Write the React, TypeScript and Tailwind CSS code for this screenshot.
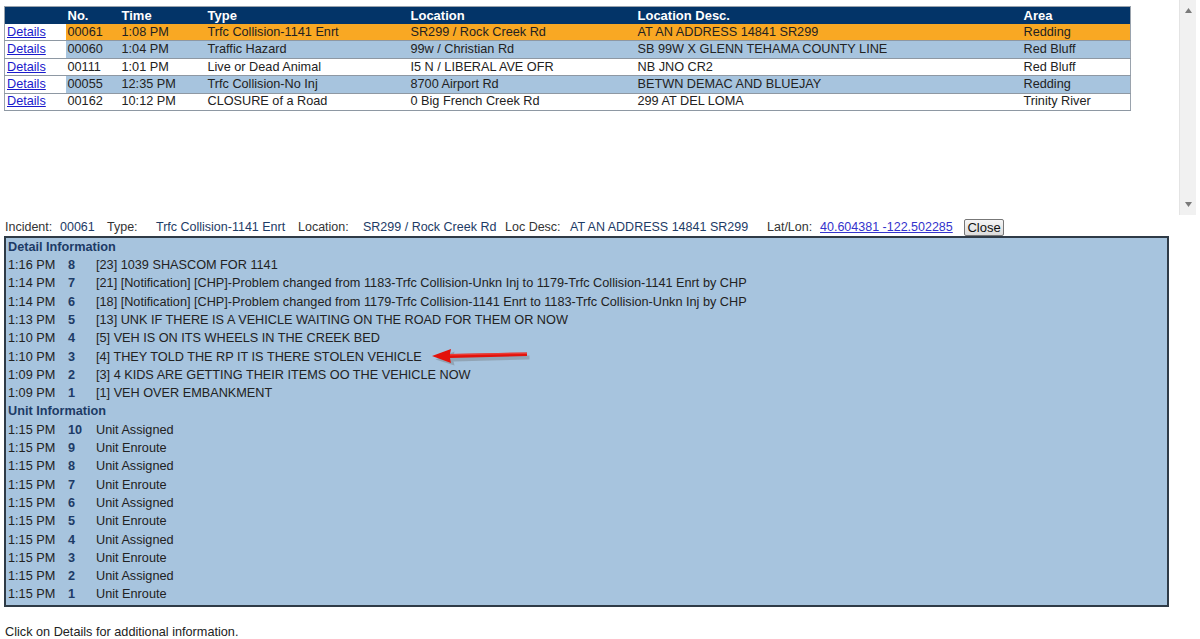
import React from "react"

const incidents = [
  { no: "00061", time: "1:08 PM", type: "Trfc Collision-1141 Enrt", loc: "SR299 / Rock Creek Rd", desc: "AT AN ADDRESS 14841 SR299", area: "Redding", bg: "bg-[#f9a823]" },
  { no: "00060", time: "1:04 PM", type: "Traffic Hazard", loc: "99w / Christian Rd", desc: "SB 99W X GLENN TEHAMA COUNTY LINE", area: "Red Bluff", bg: "bg-[#a7c4de]" },
  { no: "00111", time: "1:01 PM", type: "Live or Dead Animal", loc: "I5 N / LIBERAL AVE OFR", desc: "NB JNO CR2", area: "Red Bluff", bg: "bg-white" },
  { no: "00055", time: "12:35 PM", type: "Trfc Collision-No Inj", loc: "8700 Airport Rd", desc: "BETWN DEMAC AND BLUEJAY", area: "Redding", bg: "bg-[#a7c4de]" },
  { no: "00162", time: "10:12 PM", type: "CLOSURE of a Road", loc: "0 Big French Creek Rd", desc: "299 AT DEL LOMA", area: "Trinity River", bg: "bg-white" },
]

const details = [
  ["1:16 PM", "8", "[23] 1039 SHASCOM FOR 1141"],
  ["1:14 PM", "7", "[21] [Notification] [CHP]-Problem changed from 1183-Trfc Collision-Unkn Inj to 1179-Trfc Collision-1141 Enrt by CHP"],
  ["1:14 PM", "6", "[18] [Notification] [CHP]-Problem changed from 1179-Trfc Collision-1141 Enrt to 1183-Trfc Collision-Unkn Inj by CHP"],
  ["1:13 PM", "5", "[13] UNK IF THERE IS A VEHICLE WAITING ON THE ROAD FOR THEM OR NOW"],
  ["1:10 PM", "4", "[5] VEH IS ON ITS WHEELS IN THE CREEK BED"],
  ["1:10 PM", "3", "[4] THEY TOLD THE RP IT IS THERE STOLEN VEHICLE"],
  ["1:09 PM", "2", "[3] 4 KIDS ARE GETTING THEIR ITEMS OO THE VEHICLE NOW"],
  ["1:09 PM", "1", "[1] VEH OVER EMBANKMENT"],
]

const units = [10, 9, 8, 7, 6, 5, 4, 3, 2, 1].map(n => ["1:15 PM", String(n), n % 2 === 0 ? "Unit Assigned" : "Unit Enroute"])

function LogRow({ row }: { row: string[] }) {
  return (
    <div className="flex h-[18.3px] items-center">
      <span className="w-[60px] shrink-0 text-[#222]">{row[0]}</span>
      <span className="w-[28px] shrink-0 font-bold text-[#1d3b66]">{row[1]}</span>
      <span className="text-[#222] whitespace-nowrap">{row[2]}</span>
    </div>
  )
}

export default function App() {
  const cell = "pl-[2px] text-left font-normal"
  return (
    <div className="relative w-[1200px] h-[639px] overflow-hidden bg-white text-[12.7px] leading-none text-[#222]" style={{ fontFamily: '"Liberation Sans", Arial, sans-serif' }}>
      {/* incident list frame */}
      <div className="flex h-[215px]">
        <div className="pl-[4px] pt-[6px]">
          <table className="w-[1126px] table-fixed border-collapse border border-[#9aa3ad]">
            <colgroup>
              <col className="w-[61px]" />
              <col className="w-[54px]" />
              <col className="w-[86px]" />
              <col className="w-[203px]" />
              <col className="w-[227px]" />
              <col className="w-[386px]" />
              <col className="w-[109px]" />
            </colgroup>
            <thead>
              <tr className="h-[17px] bg-[#033468] text-white text-[13px]">
                <th className={cell}></th>
                <th className={`${cell} !font-bold`}>No.</th>
                <th className={`${cell} !font-bold`}>Time</th>
                <th className={`${cell} !font-bold`}>Type</th>
                <th className={`${cell} !font-bold`}>Location</th>
                <th className={`${cell} !font-bold`}>Location Desc.</th>
                <th className={`${cell} !font-bold`}>Area</th>
              </tr>
            </thead>
            <tbody>
              {incidents.map(r => (
                <tr key={r.no} className="h-[17.4px] border-b border-[#8e98a3]">
                  <td className="pl-[2px] bg-white">
                    <a href="#" className="text-[#1a1acc] underline">Details</a>
                  </td>
                  <td className={`${cell} ${r.bg}`}>{r.no}</td>
                  <td className={`${cell} ${r.bg}`}>{r.time}</td>
                  <td className={`${cell} ${r.bg}`}>{r.type}</td>
                  <td className={`${cell} ${r.bg}`}>{r.loc}</td>
                  <td className={`${cell} ${r.bg}`}>{r.desc}</td>
                  <td className={`${cell} ${r.bg}`}>{r.area}</td>
                </tr>
              ))}
            </tbody>
          </table>
        </div>
        <div className="ml-auto mr-[4px] w-[17px] h-full flex flex-col items-center justify-between bg-[#f1f1f1] border-l border-[#e4e4e4] py-[8px]">
          <svg width="7" height="5" viewBox="0 0 7 5"><path d="M3.5 0 L7 5 L0 5 Z" fill="#7a7a7a" /></svg>
          <svg width="7" height="5" viewBox="0 0 7 5"><path d="M0 0 L7 0 L3.5 5 Z" fill="#7a7a7a" /></svg>
        </div>
      </div>

      {/* incident header line */}
      <div className="flex h-[21px] items-center pl-[5px] pt-[3px] text-[12.5px] whitespace-nowrap">
        <span className="w-[55px] text-[#333]">Incident:</span>
        <span className="w-[47px] text-[#1d3b66]">00061</span>
        <span className="w-[49px] text-[#333]">Type:</span>
        <span className="w-[142px] text-[#1d3b66]">Trfc Collision-1141 Enrt</span>
        <span className="w-[65px] text-[#333]">Location:</span>
        <span className="w-[142px] text-[#1d3b66]">SR299 / Rock Creek Rd</span>
        <span className="w-[65px] text-[#333]">Loc Desc:</span>
        <span className="w-[197px] text-[#1d3b66]">AT AN ADDRESS 14841 SR299</span>
        <span className="w-[53px] text-[#333]">Lat/Lon:</span>
        <span className="w-[144px]">
          <a href="#" className="text-[#3333cc] underline">40.604381 -122.502285</a>
        </span>
        <button className="h-[17px] w-[40px] rounded-[2px] border border-[#777] bg-gradient-to-b from-[#f6f6f6] to-[#dcdcdc] text-[13px] text-[#111] leading-none">
          Close
        </button>
      </div>

      {/* detail panel */}
      <div className="ml-[4px] w-[1165px] border-2 border-[#2f3b47] bg-[#a7c4de] pl-[2px] pb-[1px]">
        <div className="flex h-[18.3px] items-center font-bold text-[#1d3b66]">Detail Information</div>
        {details.map((r, i) => <LogRow key={"d" + i} row={r} />)}
        <div className="flex h-[18.3px] items-center font-bold text-[#1d3b66]">Unit Information</div>
        {units.map((r, i) => <LogRow key={"u" + i} row={r} />)}
      </div>

      <p className="mt-[19px] pl-[5px] text-[12.7px] text-[#222]">Click on Details for additional information.</p>

      {/* red annotation arrow */}
      <svg className="absolute left-[429px] top-[345px]" width="102" height="22" viewBox="0 0 102 22">
        <path d="M5 13 L24 5 L23 10 L99 9 L99 13 L23 15 L24 19 Z" fill="#6b6b6b" opacity="0.35" transform="translate(1.5 1.5)" />
        <path d="M3 11 L22 4 L21 9 L98 7.5 L98 11 L21 13 L22 18 Z" fill="#e3120b" />
        <path d="M21 9 L98 7.5 L98 9 L21 10.5 Z" fill="#f0564f" opacity="0.6" />
      </svg>
    </div>
  )
}
